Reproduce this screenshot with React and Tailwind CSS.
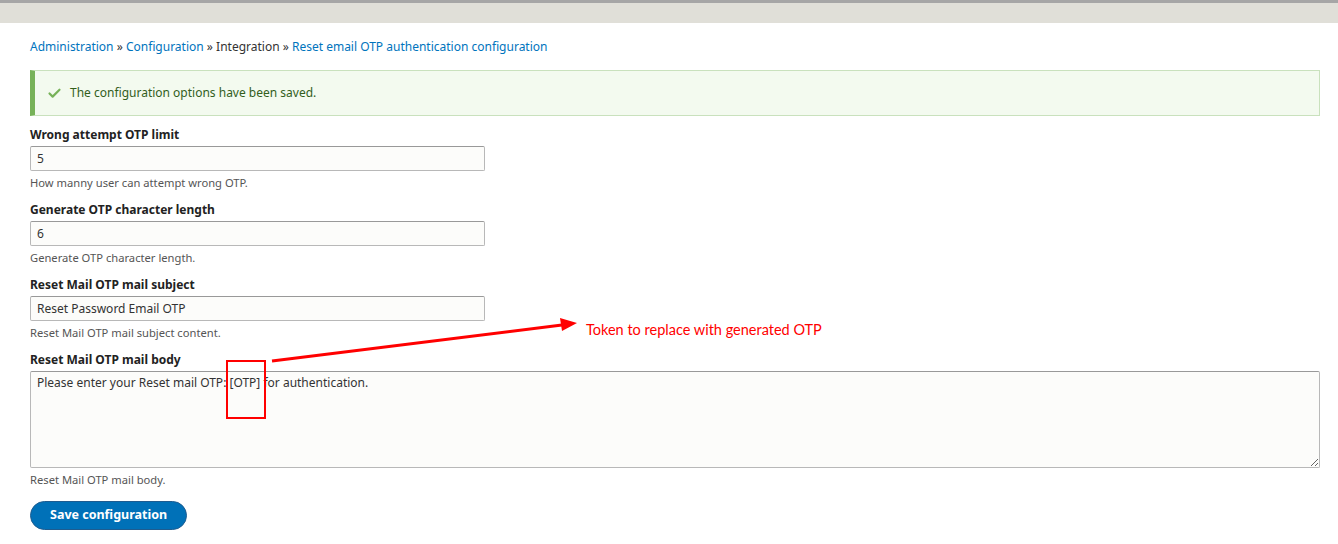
import { Check } from "lucide-react";

const FIELDS = [
  { label: "Wrong attempt OTP limit", value: "5", help: "How manny user can attempt wrong OTP." },
  { label: "Generate OTP character length", value: "6", help: "Generate OTP character length." },
  { label: "Reset Mail OTP mail subject", value: "Reset Password Email OTP", help: "Reset Mail OTP mail subject content." },
];

function TextField({ label, value, help }) {
  return (
    <div className="mb-[11px]">
      <label className="block text-[12px] font-bold text-[#222] leading-[16px] mb-[3px]">{label}</label>
      <input
        readOnly
        value={value}
        className="block w-[455px] h-[25px] px-[6px] text-[12px] text-[#333] bg-[#fcfcfa] border border-[#b8b8b8] border-t-[#999] rounded-[2px] outline-none"
      />
      <p className="text-[11.2px] text-[#555] mt-[4px] leading-[16px]">{help}</p>
    </div>
  );
}

export default function App() {
  return (
    <div className="relative min-h-[544px] bg-white font-['Noto_Sans','Liberation_Sans',sans-serif]">
      <div className="h-[23px] bg-[#e0dfd8] border-t-[3px] border-[#a6a6a6]" />

      <div className="px-[30px] pt-[15px] pr-[18px]">
        <nav className="text-[12px] leading-[18px] text-[#333]">
          <a className="text-[#0074bd]">Administration</a> » <a className="text-[#0074bd]">Configuration</a> » Integration »{" "}
          <a className="text-[#0074bd]">Reset email OTP authentication configuration</a>
        </nav>

        <div className="mt-[14px] flex items-center h-[46px] bg-[#f3faef] border border-[#c9e1bd] border-l-[5px] border-l-[#77b259] pl-[12px] text-[12px] text-[#325e1c]">
          <Check size={15} strokeWidth={3.5} className="text-[#77b259] mr-[8px]" />
          The configuration options have been saved.
        </div>

        <div className="mt-[11px]">
          {FIELDS.map((f) => (
            <TextField key={f.label} {...f} />
          ))}

          <div className="mb-[13px]">
            <label className="block text-[12px] font-bold text-[#222] leading-[16px] mb-[3px]">Reset Mail OTP mail body</label>
            <textarea
              readOnly
              value="Please enter your Reset mail OTP: [OTP] for authentication."
              className="block w-full h-[97px] px-[6px] py-[2px] leading-[18px] text-[12px] text-[#333] bg-[#fcfcfa] border border-[#b8b8b8] border-t-[#999] rounded-[2px] outline-none resize-y"
            />
            <p className="text-[11.2px] text-[#555] mt-[4px] leading-[16px]">Reset Mail OTP mail body.</p>
          </div>

          <button
            type="button"
            className="h-[29px] px-[19px] rounded-full bg-[#0071b8] border border-[#1e5c90] text-white text-[12.5px] font-bold"
          >
            Save configuration
          </button>
        </div>
      </div>

      {/* annotation overlay */}
      <div className="absolute left-[226px] top-[360px] w-[40px] h-[59px] border-2 border-[#ff0000]" />
      <svg className="absolute left-0 top-0 pointer-events-none" width="1338" height="544">
        <line x1="272" y1="361" x2="562" y2="325" stroke="#ff0000" strokeWidth="3" />
        <polygon points="577,323 560,318 562,331" fill="#ff0000" />
      </svg>
      <div className="absolute left-[586px] top-[319px] text-[14.5px] text-[#ff0000] font-['Lato',sans-serif]">
        Token to replace with generated OTP
      </div>
    </div>
  );
}
